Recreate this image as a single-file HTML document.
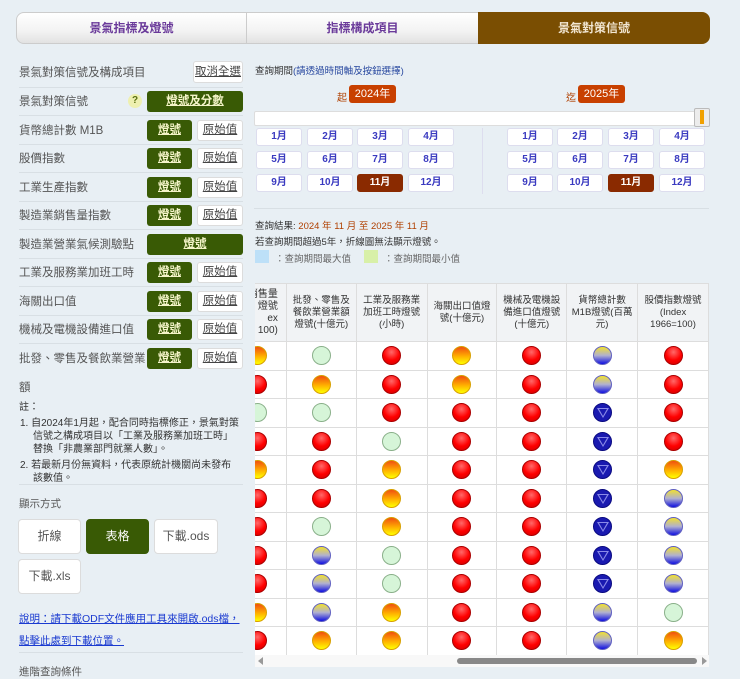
<!DOCTYPE html>
<html><head><meta charset="utf-8"><style>
*{box-sizing:border-box;margin:0;padding:0}
body{width:740px;height:679px;overflow:hidden;background:#e8eff4;font-family:"Liberation Sans","Noto Sans CJK TC",sans-serif;position:relative;color:#444}
.a{position:absolute}
.tab{position:absolute;top:12px;height:32px;line-height:31px;text-align:center;font-size:12px;font-weight:bold;color:#6a3a9a;background:linear-gradient(#fff,#f3f3f3 60%,#e2e2e2);border:1px solid #ccc}
.lbl{position:absolute;left:19px;font-size:11.5px;color:#555}
.sep{position:absolute;left:19px;width:224px;height:1px;background:#d8dfe4}
.g{position:absolute;height:21px;background:#395a05;border-radius:3px;color:#f4f4c8;font-size:11.5px;font-weight:bold;text-align:center;line-height:21px;text-decoration:underline}
.w{position:absolute;height:21px;background:#fff;border:1px solid #dcdcdc;border-radius:3px;color:#444;font-size:11.5px;text-align:center;line-height:19px;text-decoration:underline}
.m{position:absolute;width:46px;height:18px;background:#fff;border:1px solid #dde;border-radius:3px;color:#3a3ac0;font-size:10px;font-weight:bold;text-align:center;line-height:16px}
.m.s{background:#8a2a00;color:#fff;border-color:#8a2a00}
.yr{position:absolute;top:85px;height:18px;width:47px;background:#c84000;color:#fff;border-radius:3px;font-size:11px;text-align:center;line-height:18px}
table{position:absolute;left:255px;top:283px;border-collapse:collapse;background:#fff}
td,th{border:1px solid #ddd;text-align:center;padding:0}
th{background:#f1f3f5;font-weight:normal;font-size:9.5px;color:#333;height:58px;line-height:12px}
td{height:28.5px}
td:first-child{text-align:right}
td:first-child .c{margin-right:19px}
.c{display:inline-block;width:19px;height:19px;border-radius:50%;vertical-align:middle;position:relative}
.R{background:radial-gradient(circle at 50% 30%,#ff6a6a,#f00 55%,#c00);border:1px solid #a00}
.O{background:linear-gradient(#f05010,#ffb000 55%,#ff0);border:1px solid #d8a000}
.G{background:#d6f5d8;border:1px solid #8ab08a}
.B{background:linear-gradient(#f0e030,#b0b0d0 50%,#1010e0);border:1px solid #6060c0}
.D{background:#1a1ab0;border:1px solid #0a0a80}
.D:after{content:"";position:absolute;left:3px;top:4px;width:0;height:0;border-left:6px solid transparent;border-right:6px solid transparent;border-top:10px solid #8a8ae8}
.D:before{content:"";position:absolute;left:5px;top:5px;width:0;height:0;border-left:4px solid transparent;border-right:4px solid transparent;border-top:7px solid #1a1ab0;z-index:1}
.btn{position:absolute;height:35px;background:#fff;border:1px solid #dcdcdc;border-radius:4px;font-size:12px;color:#555;text-align:center;line-height:33px}
</style></head><body>
<div class="tab" style="left:16px;width:231px;border-radius:8px 0 0 8px">景氣指標及燈號</div>
<div class="tab" style="left:246px;width:233px">指標構成項目</div>
<div class="tab" style="left:478px;width:232px;background:#7a4e02;color:#f2e6d2;border-color:#7a4e02;border-radius:0 8px 8px 0">景氣對策信號</div>

<div class="lbl" style="top:64px">景氣對策信號及構成項目</div>
<div class="w" style="left:193px;top:61px;width:50px;height:22px;line-height:20px">取消全選</div>
<div class="sep" style="top:87px"></div>
<div class="lbl" style="top:93px">景氣對策信號</div>
<div class="a" style="left:128px;top:94px;width:14px;height:14px;border-radius:50%;background:#eef0b0;color:#5a7010;font-size:10px;font-weight:bold;text-align:center;line-height:14px">?</div>
<div class="g" style="left:147px;top:91px;width:96px">燈號及分數</div>
<div class="sep" style="top:115px"></div>
<div class="lbl" style="top:122px">貨幣總計數 M1B</div><div class="g" style="left:147px;top:120px;width:45px">燈號</div><div class="w" style="left:197px;top:120px;width:46px">原始值</div>
<div class="sep" style="top:144px"></div>
<div class="lbl" style="top:150px">股價指數</div><div class="g" style="left:147px;top:148px;width:45px">燈號</div><div class="w" style="left:197px;top:148px;width:46px">原始值</div>
<div class="sep" style="top:172px"></div>
<div class="lbl" style="top:179px">工業生產指數</div><div class="g" style="left:147px;top:177px;width:45px">燈號</div><div class="w" style="left:197px;top:177px;width:46px">原始值</div>
<div class="sep" style="top:201px"></div>
<div class="lbl" style="top:207px">製造業銷售量指數</div><div class="g" style="left:147px;top:205px;width:45px">燈號</div><div class="w" style="left:197px;top:205px;width:46px">原始值</div>
<div class="sep" style="top:229px"></div>
<div class="lbl" style="top:236px">製造業營業氣候測驗點</div><div class="g" style="left:147px;top:234px;width:96px">燈號</div>
<div class="sep" style="top:258px"></div>
<div class="lbl" style="top:264px">工業及服務業加班工時</div><div class="g" style="left:147px;top:262px;width:45px">燈號</div><div class="w" style="left:197px;top:262px;width:46px">原始值</div>
<div class="sep" style="top:286px"></div>
<div class="lbl" style="top:293px">海關出口值</div><div class="g" style="left:147px;top:291px;width:45px">燈號</div><div class="w" style="left:197px;top:291px;width:46px">原始值</div>
<div class="sep" style="top:315px"></div>
<div class="lbl" style="top:321px">機械及電機設備進口值</div><div class="g" style="left:147px;top:319px;width:45px">燈號</div><div class="w" style="left:197px;top:319px;width:46px">原始值</div>
<div class="sep" style="top:343px"></div>
<div class="lbl" style="top:350px">批發、零售及餐飲業營業</div><div class="g" style="left:147px;top:348px;width:45px">燈號</div><div class="w" style="left:197px;top:348px;width:46px">原始值</div>
<div class="lbl" style="top:379px">額</div>
<div class="a" style="left:19px;top:401px;font-size:10px;color:#333;line-height:13px;width:222px">註：<br>
<div style="padding-left:14px;text-indent:-13px;margin-top:3px">1. 自2024年1月起，配合同時指標修正，景氣對策信號之構成項目以「工業及服務業加班工時」替換「非農業部門就業人數」。</div>
<div style="padding-left:14px;text-indent:-13px;margin-top:3px">2. 若最新月份無資料，代表原統計機關尚未發布該數值。</div></div>
<div class="sep" style="top:484px"></div>
<div class="lbl" style="top:496px;font-size:10.5px">顯示方式</div>
<div class="btn" style="left:18px;top:519px;width:63px">折線</div>
<div class="btn" style="left:86px;top:519px;width:63px;background:#395a05;color:#fff;border-color:#395a05">表格</div>
<div class="btn" style="left:154px;top:519px;width:64px">下載.ods</div>
<div class="btn" style="left:18px;top:559px;width:63px">下載.xls</div>
<div class="a" style="left:19px;top:608px;font-size:10.5px;color:#1a3ad0;text-decoration:underline;line-height:22px;width:230px">說明：請下載ODF文件應用工具來開啟.ods檔，點擊此處到下載位置。</div>
<div class="sep" style="top:652px"></div>
<div class="lbl" style="top:664px;font-size:10.5px">進階查詢條件</div>

<div class="a" style="left:255px;top:63px;font-size:9.5px;color:#333">查詢期間<span style="color:#2a4aa0">(請透過時間軸及按鈕選擇)</span></div>
<div class="a" style="left:337px;top:89px;font-size:10px;color:#b04000">起</div><div class="yr" style="left:349px">2024年</div>
<div class="a" style="left:566px;top:89px;font-size:10px;color:#b04000">迄</div><div class="yr" style="left:578px">2025年</div>
<div class="a" style="left:254px;top:111px;width:455px;height:15px;background:#fff;border:1px solid #ddd;border-radius:2px"></div>
<div class="a" style="left:694px;top:108px;width:16px;height:19px;background:#ececec;border:1px solid #bbb;border-radius:2px"></div>
<div class="a" style="left:700px;top:110px;width:4px;height:14px;background:#f0a000"></div>
<div class="a" style="left:482px;top:128px;width:1px;height:66px;background:#dde"></div>
<div class="m" style="left:256px;top:128px">1月</div><div class="m" style="left:307px;top:128px">2月</div><div class="m" style="left:357px;top:128px">3月</div><div class="m" style="left:408px;top:128px">4月</div>
<div class="m" style="left:256px;top:151px">5月</div><div class="m" style="left:307px;top:151px">6月</div><div class="m" style="left:357px;top:151px">7月</div><div class="m" style="left:408px;top:151px">8月</div>
<div class="m" style="left:256px;top:174px">9月</div><div class="m" style="left:307px;top:174px">10月</div><div class="m s" style="left:357px;top:174px">11月</div><div class="m" style="left:408px;top:174px">12月</div>
<div class="m" style="left:507px;top:128px">1月</div><div class="m" style="left:557px;top:128px">2月</div><div class="m" style="left:608px;top:128px">3月</div><div class="m" style="left:659px;top:128px">4月</div>
<div class="m" style="left:507px;top:151px">5月</div><div class="m" style="left:557px;top:151px">6月</div><div class="m" style="left:608px;top:151px">7月</div><div class="m" style="left:659px;top:151px">8月</div>
<div class="m" style="left:507px;top:174px">9月</div><div class="m" style="left:557px;top:174px">10月</div><div class="m s" style="left:608px;top:174px">11月</div><div class="m" style="left:659px;top:174px">12月</div>
<div class="a" style="left:254px;top:208px;width:455px;height:1px;background:#d8dfe4"></div>
<div class="a" style="left:255px;top:218px;font-size:9.5px;color:#333">查詢結果: <span style="color:#b04000">2024 年 11 月 至 2025 年 11 月</span></div>
<div class="a" style="left:255px;top:234px;font-size:9.5px;color:#333">若查詢期間超過5年，折線圖無法顯示燈號。</div>
<div class="a" style="left:255px;top:250px;width:14px;height:13px;background:#bde0f8"></div>
<div class="a" style="left:275px;top:251px;font-size:9.5px;color:#666">：查詢期間最大值</div>
<div class="a" style="left:364px;top:250px;width:14px;height:13px;background:#d8f0a8"></div>
<div class="a" style="left:384px;top:251px;font-size:9.5px;color:#666">：查詢期間最小值</div>

<div class="a" style="left:255px;top:283px;width:454px;height:384px;overflow:hidden">
<table style="left:-40px;top:0;width:494px">
<tr><th style="width:71px;text-align:right;padding-right:8px;font-size:10px">銷售量<br>燈號<br>ex<br>100)</th><th style="width:70px">批發、零售及<br>餐飲業營業額<br>燈號(十億元)</th><th style="width:71px">工業及服務業<br>加班工時燈號<br>(小時)</th><th style="width:70px">海關出口值燈<br>號(十億元)</th><th style="width:70px">機械及電機設<br>備進口值燈號<br>(十億元)</th><th style="width:71px">貨幣總計數<br>M1B燈號(百萬<br>元)</th><th style="width:71px">股價指數燈號<br>(Index<br>1966=100)</th></tr>
<tr><td><i class="c O"></i></td><td><i class="c G"></i></td><td><i class="c R"></i></td><td><i class="c O"></i></td><td><i class="c R"></i></td><td><i class="c B"></i></td><td><i class="c R"></i></td></tr>
<tr><td><i class="c R"></i></td><td><i class="c O"></i></td><td><i class="c R"></i></td><td><i class="c O"></i></td><td><i class="c R"></i></td><td><i class="c B"></i></td><td><i class="c R"></i></td></tr>
<tr><td><i class="c G"></i></td><td><i class="c G"></i></td><td><i class="c R"></i></td><td><i class="c R"></i></td><td><i class="c R"></i></td><td><i class="c D"></i></td><td><i class="c R"></i></td></tr>
<tr><td><i class="c R"></i></td><td><i class="c R"></i></td><td><i class="c G"></i></td><td><i class="c R"></i></td><td><i class="c R"></i></td><td><i class="c D"></i></td><td><i class="c R"></i></td></tr>
<tr><td><i class="c O"></i></td><td><i class="c R"></i></td><td><i class="c O"></i></td><td><i class="c R"></i></td><td><i class="c R"></i></td><td><i class="c D"></i></td><td><i class="c O"></i></td></tr>
<tr><td><i class="c R"></i></td><td><i class="c R"></i></td><td><i class="c O"></i></td><td><i class="c R"></i></td><td><i class="c R"></i></td><td><i class="c D"></i></td><td><i class="c B"></i></td></tr>
<tr><td><i class="c R"></i></td><td><i class="c G"></i></td><td><i class="c O"></i></td><td><i class="c R"></i></td><td><i class="c R"></i></td><td><i class="c D"></i></td><td><i class="c B"></i></td></tr>
<tr><td><i class="c R"></i></td><td><i class="c B"></i></td><td><i class="c G"></i></td><td><i class="c R"></i></td><td><i class="c R"></i></td><td><i class="c D"></i></td><td><i class="c B"></i></td></tr>
<tr><td><i class="c R"></i></td><td><i class="c B"></i></td><td><i class="c G"></i></td><td><i class="c R"></i></td><td><i class="c R"></i></td><td><i class="c D"></i></td><td><i class="c B"></i></td></tr>
<tr><td><i class="c O"></i></td><td><i class="c B"></i></td><td><i class="c O"></i></td><td><i class="c R"></i></td><td><i class="c R"></i></td><td><i class="c B"></i></td><td><i class="c G"></i></td></tr>
<tr><td><i class="c R"></i></td><td><i class="c O"></i></td><td><i class="c O"></i></td><td><i class="c R"></i></td><td><i class="c R"></i></td><td><i class="c B"></i></td><td><i class="c O"></i></td></tr>
</table>
</div>
<div class="a" style="left:255px;top:655px;width:454px;height:12px;background:#f8f8f8"></div>
<div class="a" style="left:258px;top:657px;width:0;height:0;border-top:4px solid transparent;border-bottom:4px solid transparent;border-right:5px solid #999"></div>
<div class="a" style="left:457px;top:658px;width:240px;height:6px;background:#888;border-radius:3px"></div>
<div class="a" style="left:702px;top:657px;width:0;height:0;border-top:4px solid transparent;border-bottom:4px solid transparent;border-left:5px solid #999"></div>
</body></html>
